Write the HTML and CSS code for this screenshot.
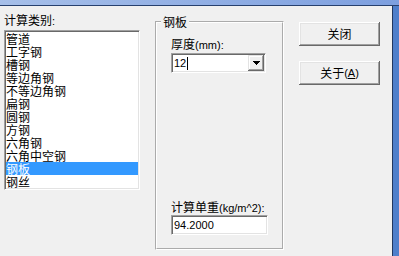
FILE: index.html
```html
<!DOCTYPE html>
<html>
<head>
<meta charset="utf-8">
<title>钢板</title>
<link rel="stylesheet" href="styles.css">
</head>
<body>
<div class="window">
  <div class="caption-edge"></div>
  <div class="frame">
    <div class="client">
      <div class="left">
        <div class="label">计算类别<span class="lat">:</span></div>
        <ul class="listbox">
          <li>管道</li>
          <li>工字钢</li>
          <li>槽钢</li>
          <li>等边角钢</li>
          <li>不等边角钢</li>
          <li>扁钢</li>
          <li>圆钢</li>
          <li>方钢</li>
          <li>六角钢</li>
          <li>六角中空钢</li>
          <li class="sel">钢板</li>
          <li>钢丝</li>
        </ul>
      </div>
      <fieldset class="group">
        <legend>钢板</legend>
        <div class="group-body">
          <div class="label first">厚度<span class="lat">(mm):</span></div>
          <div class="combo">
            <div class="combo-text"><span class="lat">12</span><span class="caret"></span></div>
            <div class="combo-btn">
              <svg width="7" height="4" viewBox="0 0 7 4" shape-rendering="crispEdges">
                <rect x="0" y="0" width="7" height="1" fill="#000"/>
                <rect x="1" y="1" width="5" height="1" fill="#000"/>
                <rect x="2" y="2" width="3" height="1" fill="#000"/>
                <rect x="3" y="3" width="1" height="1" fill="#000"/>
              </svg>
            </div>
          </div>
          <div class="bottom">
            <div class="label">计算单重<span class="lat">(kg/m^2):</span></div>
            <div class="edit"><span class="lat">94.2000</span></div>
          </div>
        </div>
      </fieldset>
      <div class="buttons">
        <div class="btn">关闭</div>
        <div class="btn">关于<span class="lat">(<u>A</u>)</span></div>
      </div>
    </div>
    <div class="frame-right"></div>
  </div>
</div>
</body>
</html>
```
FILE: styles.css
```css
html, body {
  margin: 0;
  padding: 0;
}
body {
  width: 399px;
  height: 256px;
  overflow: hidden;
  background: #f0f0f0;
  font-family: "Noto Sans CJK SC", sans-serif;
  font-size: 12px;
  color: #000;
}
.window {
  display: flex;
  flex-direction: column;
  width: 399px;
  height: 256px;
}
.caption-edge {
  flex: none;
  height: 5px;
  background: linear-gradient(to right, #a6bfe9, #7d9fdf);
  border-bottom: 1px solid #27406e;
}
.frame {
  flex: 1;
  display: flex;
}
.client {
  flex: none;
  width: 392px;
  box-sizing: border-box;
  padding-left: 4px;
  display: flex;
  align-items: flex-start;
}
.frame-right {
  flex: 1;
  background: #4f7fcb;
  border-left: 1px solid #22375f;
}
.lat {
  font-family: "Liberation Sans", sans-serif;
  font-size: 11px;
}
.label {
  height: 14px;
  line-height: 14px;
  white-space: nowrap;
}
.left {
  margin-top: 7px;
  width: 136px;
  display: flex;
  flex-direction: column;
}
.listbox {
  list-style: none;
  margin: 3px 0 0;
  padding: 1px;
  border: 1px solid;
  border-color: #a0a0a0 #fff #fff #a0a0a0;
  box-shadow: inset 1px 1px #696969, inset -1px -1px #e3e3e3;
  background: #fff;
}
.listbox li {
  height: 13px;
  line-height: 13px;
  white-space: nowrap;
}
.listbox li.sel {
  background: #3399ff;
  color: #fff;
}
.group {
  margin: 9px 0 0 15px;
  padding: 0;
  min-width: 0;
  width: 129px;
  height: 235px;
  box-sizing: border-box;
  border: 2px groove #fff;
}
.group legend {
  margin-left: 4px;
  padding: 0 2px;
  line-height: 14px;
  font-size: 12px;
}
.group-body {
  height: 219px;
  box-sizing: border-box;
  padding-left: 14px;
  display: flex;
  flex-direction: column;
}
.label.first {
  margin-top: 8px;
}
.combo {
  margin-top: 2px;
  width: 95px;
  height: 20px;
  box-sizing: border-box;
  padding: 1px;
  display: flex;
  background: #fff;
  border: 1px solid;
  border-color: #a0a0a0 #fff #fff #a0a0a0;
  box-shadow: inset 1px 1px #696969, inset -1px -1px #e3e3e3;
}
.combo-text {
  flex: 1;
  padding-left: 1px;
  display: flex;
  align-items: center;
}
.caret {
  display: inline-block;
  width: 1px;
  height: 13px;
  background: #000;
  margin-left: 1px;
}
.combo-btn {
  flex: none;
  width: 16px;
  height: 16px;
  background: #f0f0f0;
  display: flex;
  align-items: center;
  justify-content: center;
  box-shadow: inset -1px -1px #696969, inset 1px 1px #e3e3e3, inset -2px -2px #a0a0a0, inset 2px 2px #fff;
}
.bottom {
  margin-top: auto;
  margin-bottom: 13px;
}
.bottom .label {
  margin-bottom: 1px;
}
.edit {
  width: 97px;
  height: 20px;
  box-sizing: border-box;
  padding: 1px 1px 1px 2px;
  display: flex;
  align-items: center;
  background: #fff;
  border: 1px solid;
  border-color: #a0a0a0 #fff #fff #a0a0a0;
  box-shadow: inset 1px 1px #696969, inset -1px -1px #e3e3e3;
}
.buttons {
  margin: 16px 0 0 15px;
  display: flex;
  flex-direction: column;
  gap: 15px;
}
.btn {
  width: 81px;
  height: 24px;
  box-sizing: border-box;
  display: flex;
  align-items: center;
  justify-content: center;
  line-height: 14px;
  white-space: nowrap;
  box-shadow: inset -1px -1px #696969, inset 1px 1px #fff, inset -2px -2px #a0a0a0, inset 2px 2px #e3e3e3;
}
```
